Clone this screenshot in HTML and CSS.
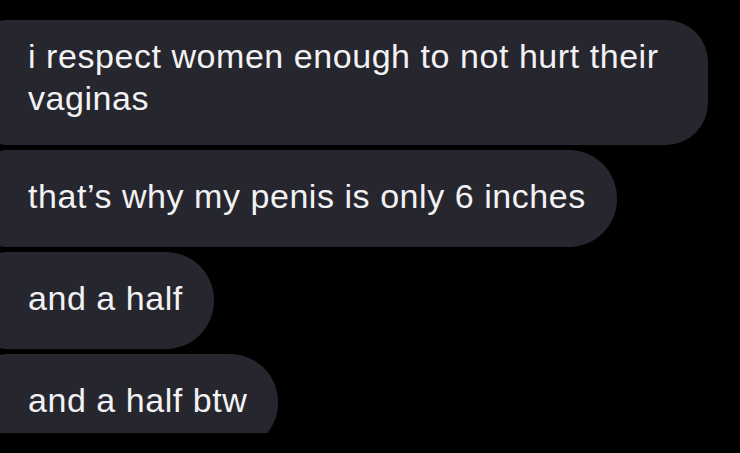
FILE: index.html
```html
<!DOCTYPE html>
<html lang="en">

<head>
  <meta charset="UTF-8">
  <meta name="viewport" content="width=device-width, initial-scale=1.0">
  <title>Messages</title>
  <link rel="stylesheet" href="styles.css">
</head>

<body>
  <div class="thread">
    <div class="bubble bubble-multi">i respect women enough to not hurt their vaginas</div>
    <div class="bubble">that’s why my penis is only 6 inches</div>
    <div class="bubble">and a half</div>
    <div class="bubble">and a half btw</div>
  </div>
</body>

</html>
```

FILE: styles.css
```css
body {
  margin: 0;
  padding: 0;
  background: #000;
  font-family: "Liberation Sans", Arial, sans-serif;
  color: #f2f2f4;
}

.thread {
  height: 433px;
  overflow: hidden;
  padding-top: 20px;
  box-sizing: border-box;
  display: flex;
  flex-direction: column;
  align-items: flex-start;
  gap: 5px;
}

.bubble {
  background-color: #26262e;
  margin-left: -12px;
  max-width: 720px;
  box-sizing: border-box;
  padding: 25px 31px 30px 40px;
  border-radius: 18px 48px 48px 18px;
  font-size: 34px;
  line-height: 42px;
  letter-spacing: 0.55px;
  flex-shrink: 0;
}

.bubble-multi {
  padding-top: 15px;
  padding-bottom: 26px;
  border-radius: 18px 42px 42px 18px;
}
```
